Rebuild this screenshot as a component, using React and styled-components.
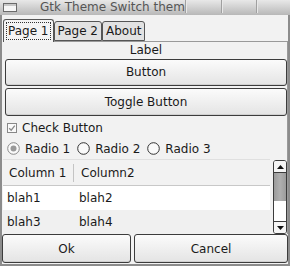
import React from 'react';
import styled, { createGlobalStyle } from 'styled-components';

const Global = createGlobalStyle`
  html, body { margin: 0; padding: 0; background: #f2f2f2; }
  body { width: 290px; height: 266px; overflow: hidden; }
  * { box-sizing: border-box; }
`;

const Window = styled.div`
  width: 290px;
  height: 266px;
  display: flex;
  flex-direction: column;
  background: #f2f2f2;
  border: 2px solid #8c8c8c;
  border-top: none;
  font-family: "DejaVu Sans", "Liberation Sans", sans-serif;
  font-size: 12px;
  color: #1a1a1a;
`;

const TitleBar = styled.div`
  height: 15px;
  margin: 0 -2px;
  display: flex;
  align-items: stretch;
  background: linear-gradient(#e8e8e8, #b8b8b8);
`;

const WinIcon = styled.div`
  width: 14px;
  height: 9px;
  margin: 3px 0 0 3px;
  border: 1px solid #6a6a6a;
  background: linear-gradient(#c8c8c8 0 2px, #f6f6f6 2px);
`;

const Title = styled.div`
  flex: 1;
  padding-left: 23px;
  font-size: 12px;
  line-height: 15px;
  color: #555;
  white-space: nowrap;
  overflow: hidden;
`;

const TitleCell = styled.div`
  width: ${p => p.w}px;
  border-left: 1px solid #a0a0a0;
  box-shadow: inset 1px 0 0 #e8e8e8;
  margin-bottom: 2px;
`;

const Tabs = styled.div`
  display: flex;
  align-items: flex-end;
  height: 24px;
  margin-top: 2px;
  padding-left: 1px;
`;

const Tab = styled.div`
  height: ${p => (p.active ? 23 : 20)}px;
  padding: 0 3px;
  margin-bottom: ${p => (p.active ? -1 : 0)}px;
  display: flex;
  align-items: center;
  border: 1px solid #555;
  border-bottom: ${p => (p.active ? 'none' : '1px solid #555')};
  border-radius: 3px 3px 0 0;
  background: ${p => (p.active ? '#f4f4f4' : '#e2e2e2')};
  position: relative;
  z-index: ${p => (p.active ? 1 : 0)};
`;

const FocusText = styled.span`
  outline: 1px dotted #333;
  padding: 0 1px;
  line-height: 16px;
`;

const Panel = styled.div`
  flex: 1;
  display: flex;
  flex-direction: column;
  border-top: 1px solid #9a9a9a;
  border-right: 1px solid #9a9a9a;
  margin-left: 1px;
  padding: 0 0 0 2px;
  min-height: 0;
`;

const Label = styled.div`
  height: 17px;
  text-align: center;
  line-height: 16px;
`;

const Button = styled.div`
  height: ${p => p.h || 28}px;
  margin-bottom: 2px;
  display: flex;
  align-items: center;
  justify-content: center;
  border: 1px solid #3c3c3c;
  border-radius: 3px;
  background: linear-gradient(#fbfbfb, #e4e4e4);
  box-shadow: inset 0 -1px 0 #d0d0d0;
`;

const CheckRow = styled.div`
  height: 21px;
  display: flex;
  align-items: center;
  gap: 5px;
  padding-left: 2px;
`;

const RadioItem = styled.span`
  display: inline-flex;
  align-items: center;
  gap: 5px;
  margin-right: 2px;
`;

const Tree = styled.div`
  display: flex;
  height: 76px;
  margin-left: -2px;
`;

const TreeBody = styled.div`
  flex: 1;
  display: flex;
  flex-direction: column;
`;

const HeaderRow = styled.div`
  height: 27px;
  display: flex;
  align-items: center;
  border-top: 1px solid #e0e0e0;
  border-bottom: 1px solid #c8c8c8;
  background: #f2f2f2;
`;

const HeaderCell = styled.div`
  width: ${p => p.w}px;
  padding-left: ${p => p.pl}px;
  border-right: ${p => (p.sep ? '1px solid #c4c4c4' : 'none')};
  line-height: 18px;
`;

const Row = styled.div`
  height: 24px;
  display: flex;
  align-items: center;
  background: ${p => (p.alt ? '#f0f0f0' : '#ffffff')};
`;

const Cell = styled.div`
  width: ${p => p.w}px;
  padding-left: ${p => p.pl}px;
`;

const Scrollbar = styled.div`
  width: 14px;
  margin: 1px 0 0 3px;
  display: flex;
  flex-direction: column;
  border: 1px solid #3c3c3c;
  border-radius: 3px;
  background: #fff;
  overflow: hidden;
`;

const Arrow = styled.div`
  height: 12px;
  display: flex;
  align-items: center;
  justify-content: center;
  background: #f6f6f6;
  border-${p => (p.up ? 'bottom' : 'top')}: 1px solid #3c3c3c;
`;

const Thumb = styled.div`
  height: 28px;
  background: linear-gradient(90deg, #9c9c9c, #b0b0b0, #9c9c9c);
`;

const Track = styled.div`
  flex: 1;
  background: #fff;
`;

const ActionRow = styled.div`
  display: flex;
  gap: 3px;
  padding: 0 0 1px 0;
`;

const ActionButton = styled(Button)`
  flex: ${p => p.grow};
  margin-bottom: 0;
`;

const CheckIcon = () => (
  <svg width="10" height="10" viewBox="0 0 10 10">
    <rect x="0.5" y="0.5" width="9" height="9" fill="#fafafa" stroke="#888" />
    <path d="M2.2 5.2 L4.2 7.2 L7.8 2.6" fill="none" stroke="#8a8a8a" strokeWidth="1.3" />
  </svg>
);

const RadioIcon = ({ on }) => (
  <svg width="13" height="13" viewBox="0 0 13 13">
    <circle cx="6.5" cy="6.5" r="5.8" fill="#fafafa" stroke={on ? '#8a8a8a' : '#333'} strokeWidth="1" />
    {on && <circle cx="6.5" cy="6.5" r="3" fill="#999" />}
  </svg>
);

const ArrowIcon = ({ up }) => (
  <svg width="7" height="4" viewBox="0 0 7 4">
    <path d={up ? 'M0 4 L3.5 0 L7 4 Z' : 'M0 0 L3.5 4 L7 0 Z'} fill="#111" />
  </svg>
);

export default function App() {
  return (
    <Window>
      <Global />
      <TitleBar>
        <WinIcon />
        <Title>Gtk Theme Switch theme preview</Title>
        <TitleCell w={36} />
        <TitleCell w={35} />
        <TitleCell w={34} />
      </TitleBar>
      <Tabs>
        <Tab active><FocusText>Page 1</FocusText></Tab>
        <Tab>Page 2</Tab>
        <Tab>About</Tab>
      </Tabs>
      <Panel>
        <Label>Label</Label>
        <Button h={28}>Button</Button>
        <Button h={28}>Toggle Button</Button>
        <CheckRow>
          <CheckIcon />
          Check Button
        </CheckRow>
        <CheckRow>
          <RadioItem><RadioIcon on />Radio 1</RadioItem>
          <RadioItem><RadioIcon />Radio 2</RadioItem>
          <RadioItem><RadioIcon />Radio 3</RadioItem>
        </CheckRow>
        <Tree>
          <TreeBody>
            <HeaderRow>
              <HeaderCell w={71} pl={6} sep>Column 1</HeaderCell>
              <HeaderCell pl={7}>Column2</HeaderCell>
            </HeaderRow>
            <Row>
              <Cell w={72} pl={4}>blah1</Cell>
              <Cell pl={4}>blah2</Cell>
            </Row>
            <Row alt>
              <Cell w={72} pl={4}>blah3</Cell>
              <Cell pl={4}>blah4</Cell>
            </Row>
          </TreeBody>
          <Scrollbar>
            <Arrow up><ArrowIcon up /></Arrow>
            <Thumb />
            <Track />
            <Arrow><ArrowIcon /></Arrow>
          </Scrollbar>
        </Tree>
      </Panel>
      <ActionRow>
        <ActionButton h={29} grow={128}>Ok</ActionButton>
        <ActionButton h={29} grow={153}>Cancel</ActionButton>
      </ActionRow>
    </Window>
  );
}
